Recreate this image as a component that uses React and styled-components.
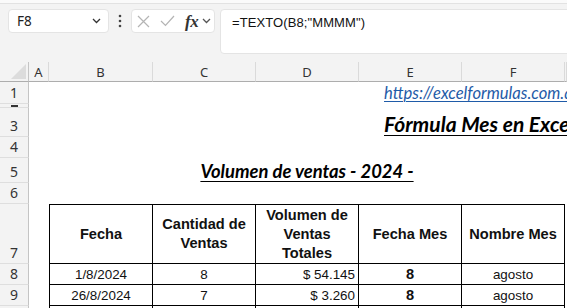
import styled, { createGlobalStyle } from "styled-components";

const GlobalStyle = createGlobalStyle`
  html, body {
    margin: 0;
    padding: 0;
  }
  body {
    background: #f3f3f3;
    font-family: "Liberation Sans", Arial, sans-serif;
    overflow: hidden;
  }
  * {
    box-sizing: border-box;
  }
`;

const COLS = "29px 20px 104px 103px 103px 103px 103px 1fr";

const Page = styled.div`
  width: 567px;
  height: 308px;
  overflow: hidden;
`;

const TopStrip = styled.div`
  height: 4px;
  background: #fafafa;
  border-bottom: 1px solid #e2e2e2;
`;

const FormulaBar = styled.div`
  display: flex;
  align-items: flex-start;
  height: 58px;
  padding: 5px 0 0 8px;
`;

const Box = styled.div`
  background: #fff;
  border: 1px solid #e4e4e4;
  border-radius: 4px;
  height: 24px;
  display: flex;
  align-items: center;
`;

const NameBox = styled(Box)`
  width: 101px;
  justify-content: space-between;
  padding: 0 7px 0 8px;
  font-family: "Noto Sans", sans-serif;
  font-size: 13.5px;
  color: #222;
`;

const Kebab = styled.div`
  width: 22px;
  height: 24px;
  display: flex;
  align-items: center;
  justify-content: center;
`;

const FxBox = styled(Box)`
  width: 84px;
  padding-left: 5px;
`;

const IconSlot = styled.span`
  display: flex;
  align-items: center;
  margin-left: ${(p) => p.gap || 0}px;
`;

const Fx = styled.span`
  font-family: "Liberation Serif", serif;
  font-style: italic;
  font-weight: bold;
  font-size: 17px;
  line-height: 1;
  color: #333;
  letter-spacing: -0.5px;
  margin-left: 10px;
`;

const FormulaInput = styled(Box)`
  flex: 1;
  height: 45px;
  margin-left: 5px;
  margin-right: -6px;
  align-items: flex-start;
  padding: 5px 11px;
  font-size: 13px;
  color: #111;
  letter-spacing: 0.1px;
`;

const Sheet = styled.div`
  background: #fff;
`;

const Row = styled.div`
  display: grid;
  grid-template-columns: ${COLS};
  height: ${(p) => p.h}px;
`;

const Corner = styled.div`
  background: #f3f3f3;
  border-right: 1px solid #c4c4c4;
  border-bottom: 1px solid #adadad;
  position: relative;
  &::after {
    content: "";
    position: absolute;
    right: 2px;
    bottom: 2px;
    border-style: solid;
    border-width: 0 0 15px 15px;
    border-color: transparent transparent #dcdcdc transparent;
  }
`;

const ColHead = styled.div`
  background: #f3f3f3;
  border-right: 1px solid #dadada;
  border-bottom: 1px solid #adadad;
  display: flex;
  align-items: center;
  justify-content: center;
  font-family: "Noto Sans", sans-serif;
  font-size: 13px;
  color: #333;
`;

const RowHead = styled.div`
  background: #f3f3f3;
  border-right: 1px solid #c4c4c4;
  border-bottom: 1px solid #dedede;
  display: flex;
  align-items: flex-end;
  justify-content: center;
  overflow: hidden;
  font-family: "Noto Sans", sans-serif;
  font-size: 14px;
  line-height: 19px;
  color: #333;
  padding-bottom: 1px;
`;

/* hidden row 2: Excel only shows the foot of its number */
const HiddenRowHead = styled.div`
  background: #f3f3f3;
  border-right: 1px solid #c4c4c4;
  border-bottom: 1px solid #dedede;
  display: flex;
  justify-content: center;
  &::before {
    content: "";
    width: 7px;
    height: 2px;
    margin-top: 1px;
    background: #333;
  }
`;

const Cell = styled.div`
  min-width: 0;
`;

const Overflow = styled.div`
  grid-column: span ${(p) => p.span};
  display: flex;
  align-items: flex-end;
  justify-content: ${(p) => (p.center ? "center" : "flex-start")};
  padding-left: ${(p) => p.indent || 0}px;
  padding-bottom: 2px;
  white-space: nowrap;
  overflow: hidden;
  font-family: Lato, "Open Sans", sans-serif;
`;

const Link = styled.span`
  font-style: italic;
  font-size: 16.6px;
  line-height: 18px;
  color: #1f5ba8;
  text-decoration: underline;
  text-decoration-thickness: 1px;
  text-underline-offset: 2px;
`;

const Title = styled.span`
  font-style: italic;
  font-weight: bold;
  font-size: ${(p) => p.size}px;
  line-height: ${(p) => p.size + 2}px;
  color: #000;
  text-decoration: underline;
  text-decoration-thickness: 1px;
  text-underline-offset: 3px;
`;

const TCell = styled.div`
  border-right: 1px solid #000;
  border-bottom: 1px solid #000;
  border-left: ${(p) => (p.first ? "1px solid #000" : "none")};
  border-top: ${(p) => (p.top ? "1px solid #000" : "none")};
  display: flex;
  align-items: center;
  justify-content: ${(p) => p.align || "center"};
  text-align: center;
  padding: 0 ${(p) => (p.align === "flex-end" ? 3 : 2)}px;
  font-size: ${(p) => (p.bold ? 14.6 : 13.4)}px;
  font-weight: ${(p) => (p.bold ? "bold" : "normal")};
  line-height: 19px;
  color: #111;
`;

const ChevronDown = ({ color = "#333" }) => (
  <svg width="9" height="6" viewBox="0 0 9 6">
    <polyline
      points="1,1 4.5,4.5 8,1"
      fill="none"
      stroke={color}
      strokeWidth="1.3"
    />
  </svg>
);

const Dots = () => (
  <svg width="4" height="14" viewBox="0 0 4 14">
    <circle cx="2" cy="2" r="1.3" fill="#444" />
    <circle cx="2" cy="7" r="1.3" fill="#444" />
    <circle cx="2" cy="12" r="1.3" fill="#444" />
  </svg>
);

const CancelIcon = () => (
  <svg width="13" height="13" viewBox="0 0 13 13">
    <path d="M1 1L12 12M12 1L1 12" stroke="#b4b4b4" strokeWidth="1.2" />
  </svg>
);

const EnterIcon = () => (
  <svg width="15" height="12" viewBox="0 0 15 12">
    <polyline
      points="1,6 5.5,10.5 14,1"
      fill="none"
      stroke="#b4b4b4"
      strokeWidth="1.2"
    />
  </svg>
);

const columns = ["A", "B", "C", "D", "E", "F", ""];

const headers = [
  "Fecha",
  "Cantidad de Ventas",
  "Volumen de Ventas Totales",
  "Fecha Mes",
  "Nombre Mes",
];

const sales = [
  { date: "1/8/2024", qty: 8, total: "$ 54.145", month: 8, name: "agosto" },
  { date: "26/8/2024", qty: 7, total: "$ 3.260", month: 8, name: "agosto" },
];

const Empty = ({ n }) =>
  Array.from({ length: n }, (_, i) => <Cell key={i} />);

export default function App() {
  return (
    <Page>
      <GlobalStyle />
      <TopStrip />
      <FormulaBar>
        <NameBox>
          <span>F8</span>
          <ChevronDown />
        </NameBox>
        <Kebab>
          <Dots />
        </Kebab>
        <FxBox>
          <IconSlot>
            <CancelIcon />
          </IconSlot>
          <IconSlot gap={10}>
            <EnterIcon />
          </IconSlot>
          <Fx>fx</Fx>
          <IconSlot gap={4}>
            <ChevronDown color="#555" />
          </IconSlot>
        </FxBox>
        <FormulaInput>=TEXTO(B8;"MMMM")</FormulaInput>
      </FormulaBar>

      <Sheet>
        <Row h={20}>
          <Corner />
          {columns.map((c, i) => (
            <ColHead key={i}>{c}</ColHead>
          ))}
        </Row>

        <Row h={22}>
          <RowHead>1</RowHead>
          <Empty n={4} />
          <Overflow span={3} indent={25}>
            <Link>https://excelformulas.com.ar</Link>
          </Overflow>
        </Row>

        <Row h={4}>
          <HiddenRowHead />
          <Empty n={7} />
        </Row>

        <Row h={29}>
          <RowHead>3</RowHead>
          <Empty n={4} />
          <Overflow span={3} indent={25}>
            <Title size={21}>Fórmula Mes en Excel</Title>
          </Overflow>
        </Row>

        <Row h={21}>
          <RowHead>4</RowHead>
          <Empty n={7} />
        </Row>

        <Row h={25}>
          <RowHead>5</RowHead>
          <Cell />
          <Overflow span={5} center>
            <Title size={18.4}>Volumen de ventas - 2024 -</Title>
          </Overflow>
          <Cell />
        </Row>

        <Row h={21}>
          <RowHead>6</RowHead>
          <Empty n={7} />
        </Row>

        <Row h={60}>
          <RowHead>7</RowHead>
          <Cell />
          {headers.map((h, i) => (
            <TCell key={h} bold top first={i === 0}>
              {h}
            </TCell>
          ))}
          <Cell />
        </Row>

        {sales.map((s, i) => (
          <Row h={21} key={i}>
            <RowHead>{8 + i}</RowHead>
            <Cell />
            <TCell first>{s.date}</TCell>
            <TCell>{s.qty}</TCell>
            <TCell align="flex-end">{s.total}</TCell>
            <TCell bold>{s.month}</TCell>
            <TCell>{s.name}</TCell>
            <Cell />
          </Row>
        ))}

        <Row h={21}>
          <RowHead>10</RowHead>
          <Cell />
          <TCell first />
          <TCell />
          <TCell />
          <TCell />
          <TCell />
          <Cell />
        </Row>
      </Sheet>
    </Page>
  );
}
